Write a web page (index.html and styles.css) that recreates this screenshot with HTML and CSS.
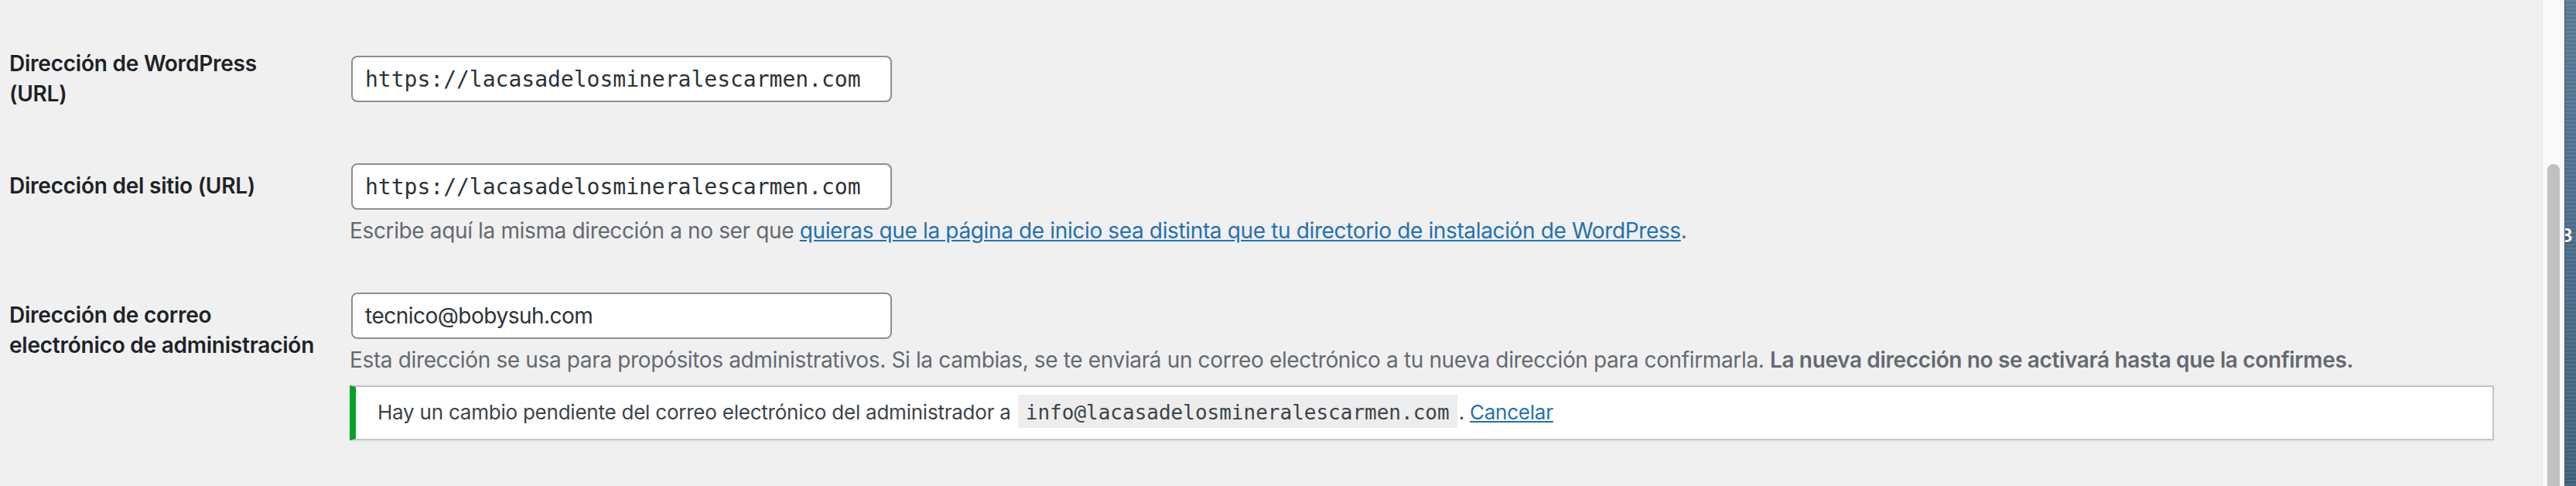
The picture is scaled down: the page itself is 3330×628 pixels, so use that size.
FILE: index.html
```html
<!DOCTYPE html>
<html lang="es">
<head>
<meta charset="utf-8">
<title>Ajustes generales</title>
<link rel="stylesheet" href="styles.css">
</head>
<body>
<div class="window">
  <main class="content">
    <table class="form-table">
      <tr class="row">
        <th scope="row">Dirección de WordPress<br>(URL)</th>
        <td><input class="field code" type="url" value="https://lacasadelosmineralescarmen.com"></td>
      </tr>
      <tr class="row">
        <th scope="row">Dirección del sitio (URL)</th>
        <td>
          <input class="field code" type="url" value="https://lacasadelosmineralescarmen.com">
          <p class="description">Escribe aquí la misma dirección a no ser que <a href="#">quieras que la página de inicio sea distinta que tu directorio de instalación de WordPress</a>.</p>
        </td>
      </tr>
      <tr class="row">
        <th scope="row">Dirección de correo<br>electrónico de administración</th>
        <td>
          <input class="field" type="email" value="tecnico@bobysuh.com">
          <p class="description">Esta dirección se usa para propósitos administrativos. Si la cambias, se te enviará un correo electrónico a tu nueva dirección para confirmarla. <strong>La nueva dirección no se activará hasta que la confirmes.</strong></p>
          <div class="notice">
            <p>Hay un cambio pendiente del correo electrónico del administrador a <code>info@lacasadelosmineralescarmen.com</code>. <a href="#">Cancelar</a></p>
          </div>
        </td>
      </tr>
    </table>
  </main>
  <div class="scrollbar"><div class="thumb"></div></div>
  <div class="desktop"><span class="desk-label">8</span></div>
</div>
</body>
</html>
```

FILE: styles.css
```css
html, body {
  margin: 0;
  padding: 0;
  height: 100%;
  background: #f0f0f1;
}

body {
  font-family: Inter, Roboto, "Liberation Sans", sans-serif;
  color: #3c434a;
  overflow: hidden;
}

.window {
  display: flex;
  height: 628px;
  width: 3330px;
}

.content {
  flex: 1;
  padding: 23px 42px 0 12px;
  background: #f0f0f1;
  overflow: hidden;
}

.form-table {
  border-collapse: collapse;
  width: 100%;
}

.form-table th {
  width: 420px;
  padding: 40px 0 40px 0;
  text-align: left;
  vertical-align: top;
  font-size: 28px;
  line-height: 39px;
  font-weight: 600;
  letter-spacing: -0.23px;
  color: #1d2327;
  white-space: nowrap;
}

.form-table td {
  padding: 30px 20px;
  vertical-align: middle;
}

.field {
  display: block;
  box-sizing: border-box;
  width: 699px;
  height: 60px;
  margin: 0 2px;
  padding: 0 16px;
  border: 2px solid #8c8f94;
  border-radius: 8px;
  background: #fff;
  color: #2c3338;
  font-family: inherit;
  font-size: 28px;
  line-height: 56px;
  letter-spacing: -0.5px;
  outline: none;
}

.field.code {
  font-family: "DejaVu Sans Mono", "Liberation Mono", monospace;
  letter-spacing: 0;
}

.description {
  margin: 8px 0 0;
  font-size: 28px;
  line-height: 39px;
  letter-spacing: -0.36px;
  color: #646970;
}

.description strong {
  font-weight: 600;
}

a {
  color: #2271b1;
  text-decoration: underline;
}

.notice {
  margin-top: 13px;
  background: #fff;
  border: 2px solid #c3c4c7;
  border-left: 8px solid #00a32a;
  box-shadow: 0 2px 2px rgba(0, 0, 0, 0.04);
  padding: 0 24px 0 28px;
}

.notice p {
  margin: 13px 0 14px;
  font-size: 26px;
  line-height: 39px;
  letter-spacing: -0.23px;
  color: #3c434a;
}

.notice code {
  font-family: "DejaVu Sans Mono", "Liberation Mono", monospace;
  font-size: 26px;
  letter-spacing: 0;
  padding: 8px 10px 5px;
  margin: 0 2px;
  background: rgba(0, 0, 0, 0.07);
}

.scrollbar {
  width: 28px;
  background: #fafafa;
  border-left: 1px solid #e8e8e8;
  display: flex;
  justify-content: center;
}

.thumb {
  width: 16px;
  margin-top: 212px;
  border-radius: 8px 8px 0 0;
  background: #c1c1c1;
}

.desktop {
  width: 14px;
  overflow: hidden;
  border-left: 1px solid #3d5870;
  background:
    repeating-linear-gradient(180deg, rgba(255,255,255,0.05) 0 2px, rgba(0,0,0,0.06) 2px 5px),
    linear-gradient(180deg, #5d7f9c, #4f7190 50%, #46657f);
  position: relative;
}

.desk-label {
  position: absolute;
  left: -6px;
  top: 290px;
  font-family: Inter, sans-serif;
  font-weight: 700;
  font-size: 24px;
  color: #f2f2f2;
  text-shadow: 0 1px 2px rgba(0,0,0,0.5);
}
```
